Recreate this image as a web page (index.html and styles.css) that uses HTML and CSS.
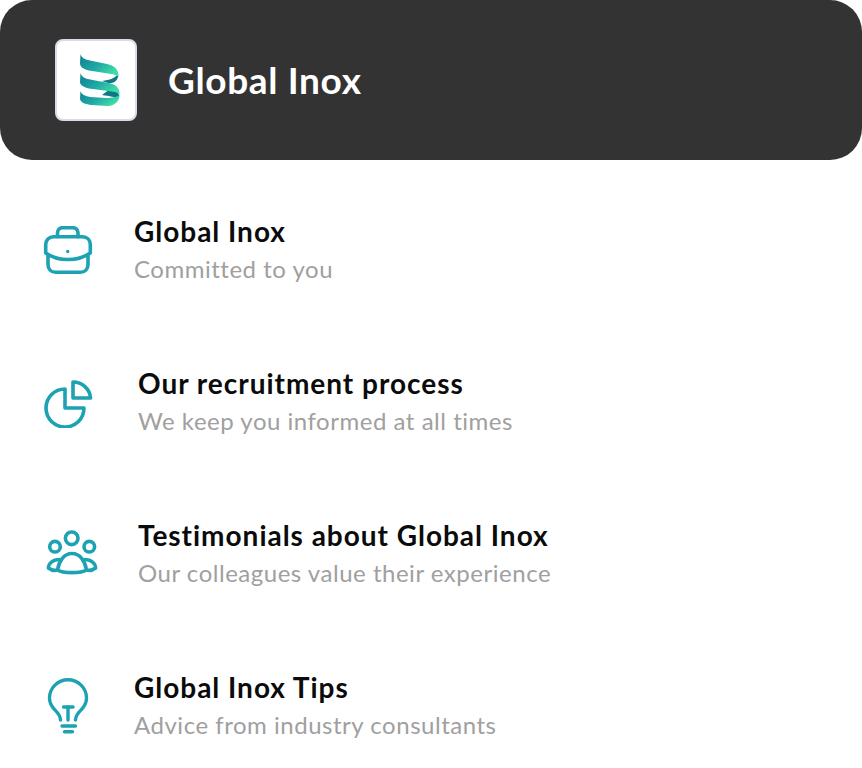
FILE: index.html
```html
<!DOCTYPE html>
<html lang="en">
<head>
<meta charset="utf-8">
<title>Global Inox</title>
<link rel="stylesheet" href="styles.css">
</head>
<body>
<header class="header">
  <div class="logo">
    <svg width="42" height="54" viewBox="0 0 42 54">
      <defs>
        <linearGradient id="g" x1="0" y1="0" x2="1" y2="0.6">
          <stop offset="0" stop-color="#0f7f8f"/>
          <stop offset="0.55" stop-color="#1fa8a5"/>
          <stop offset="1" stop-color="#3fdca8"/>
        </linearGradient>
      </defs>
      <path fill="#127784" d="M38 21 C39 27 34 31 28 30 L22 28 C30 27 35 25 38 21Z"/>
      <path fill="#127784" d="M39 42 C38 38 34 38 28 37.500 L22 42 C30 43 35 44 39 46Z"/>
      <path fill="url(#g)" d="M0.500 1 C1.500 5 5 6.500 10 7.500 L27 11 C34 12.500 39 16 38.500 24 C36 21.500 32 21 28 20.500 L9 17.500 C3 16 0 14 0 10 Z"/>
      <path fill="url(#g)" d="M0.500 20 C1.500 24 5 25.500 10 26.500 L29 30 C36 31.500 40 35 39.500 42 C38 39 33 38.500 28 38 L9 35.500 C3 34 0 32 0 29 Z"/>
      <path fill="url(#g)" d="M0.500 38 C1.500 41.500 5 43 10 44 L26 45 C32 45 37 44 39.500 42 C40 47 35 53 28 53 L11 52 C4 51 0 49 0 45.500 Z"/>
    </svg>
  </div>
  <h1 class="brand">Global Inox</h1>
</header>
<main class="list">
  <section class="item item-a">
    <span class="icon">
      <svg width="52" height="52" viewBox="0 0 52 52" fill="none" stroke="#1ca2b3" stroke-width="3.600" stroke-linecap="round" stroke-linejoin="round">
        <path d="M15.500 10.700V7C15.500 4 17.500 1.700 20.500 1.700H31C34 1.700 36 4 36 7V10.700"/>
        <path d="M3.700 27V18.700C3.700 14 7 10.700 11.500 10.700H40.500C45 10.700 48.300 14 48.300 18.700V27C42 31.500 34 33.500 26 33.500C18 33.500 10 31.500 3.700 27Z"/>
        <path d="M6 30V38.500C6 43 9 46.300 13.500 46.300H38.500C43 46.300 46 43 46 38.500V30"/>
        <circle cx="25.700" cy="25.500" r="1" fill="#1ca2b3" stroke-width="1.500"/>
      </svg>
    </span>
    <div class="copy"><h2>Global Inox</h2><p>Committed to you</p></div>
  </section>
  <section class="item item-b">
    <span class="icon">
      <svg width="52" height="52" viewBox="0 0 52 52" fill="none" stroke="#1ca2b3" stroke-width="3.600" stroke-linejoin="round">
        <path d="M23 13A19 19 0 1 0 42 32H23Z"/>
        <path d="M31 6C40 6 48 13 48.500 22H31Z"/>
      </svg>
    </span>
    <div class="copy"><h2>Our recruitment process</h2><p>We keep you informed at all times</p></div>
  </section>
  <section class="item item-c">
    <span class="icon">
      <svg width="52" height="52" viewBox="0 0 52 52" fill="none" stroke="#1ca2b3" stroke-width="3.600" stroke-linejoin="round">
        <circle cx="25.700" cy="12.300" r="6.300"/>
        <circle cx="9" cy="20.700" r="5.300"/>
        <circle cx="43.300" cy="20.700" r="5.300"/>
        <path d="M11.500 44C13 35 18 27.500 26 27.500C34 27.500 39 35 40.500 44C35 47.500 17 47.500 11.500 44Z"/>
        <path d="M14 33.500C6 33.500 2.500 38 2.400 42C5 44 8 45 11.500 44"/>
        <path d="M38 33.500C46 33.500 49.500 38 49.600 42C47 44 44 45 40.500 44"/>
      </svg>
    </span>
    <div class="copy"><h2>Testimonials about Global Inox</h2><p>Our colleagues value their experience</p></div>
  </section>
  <section class="item item-d">
    <span class="icon">
      <svg width="52" height="60" viewBox="0 0 52 60" fill="none" stroke="#1ca2b3" stroke-width="3.400" stroke-linecap="round" stroke-linejoin="round">
        <path d="M18.500 42C18.500 37 15.500 34.500 12 31C9 27.500 7.500 24.500 7.500 20C7.500 10 15.800 1.700 26 1.700C36.200 1.700 44.500 10 44.500 20C44.500 24.500 43 27.500 40 31C36.500 34.500 33.500 37 33.500 42"/>
        <path d="M26 42V29"/>
        <path d="M21.500 29H31"/>
        <path d="M20 48H33.500"/>
        <path d="M22.500 53.700H30.500"/>
      </svg>
    </span>
    <div class="copy"><h2>Global Inox Tips</h2><p>Advice from industry consultants</p></div>
  </section>
</main>
</body>
</html>
```
FILE: styles.css
```css
* { box-sizing: border-box; margin: 0; padding: 0; }
html, body { background: #fff; }
body {
  width: 862px;
  height: 768px;
  overflow: hidden;
  font-family: "Lato", "Noto Sans", sans-serif;
}
.header {
  height: 160px;
  background: #333333;
  border-radius: 32px;
  display: flex;
  align-items: center;
  padding-left: 55px;
  gap: 31px;
}
.logo {
  width: 82px;
  height: 82px;
  background: #fff;
  border: 2px solid #d6dcea;
  border-radius: 8px;
  display: flex;
  align-items: center;
  justify-content: center;
  padding-left: 9px;
}
.brand {
  color: #fff;
  font-size: 37px;
  font-weight: 700;
  line-height: 44px;
  letter-spacing: 0.65px;
}
.list {
  display: flex;
  flex-direction: column;
  gap: 88px;
  padding-top: 56px;
}
.item {
  display: flex;
  align-items: flex-start;
  height: 64px;
}
.icon { display: block; flex: none; }
.icon svg { display: block; }
.item-a { padding-left: 42px; gap: 40px; }
.item-a .icon { padding-top: 10px; }
.item-b { padding-left: 42px; gap: 44px; }
.item-b .icon { padding-top: 8px; }
.item-c { padding-left: 46px; gap: 40px; }
.item-c .icon { padding-top: 6px; }
.item-d { padding-left: 42px; gap: 40px; }
.item-d .icon { padding-top: 6px; }
.copy h2 {
  color: #0b0b0b;
  font-size: 28px;
  font-weight: 700;
  line-height: 30px;
  letter-spacing: 0.98px;
}
.copy p {
  color: #a0a0a0;
  font-size: 24px;
  font-weight: 400;
  line-height: 32px;
  margin-top: 7px;
  letter-spacing: 0.52px;
}
```
